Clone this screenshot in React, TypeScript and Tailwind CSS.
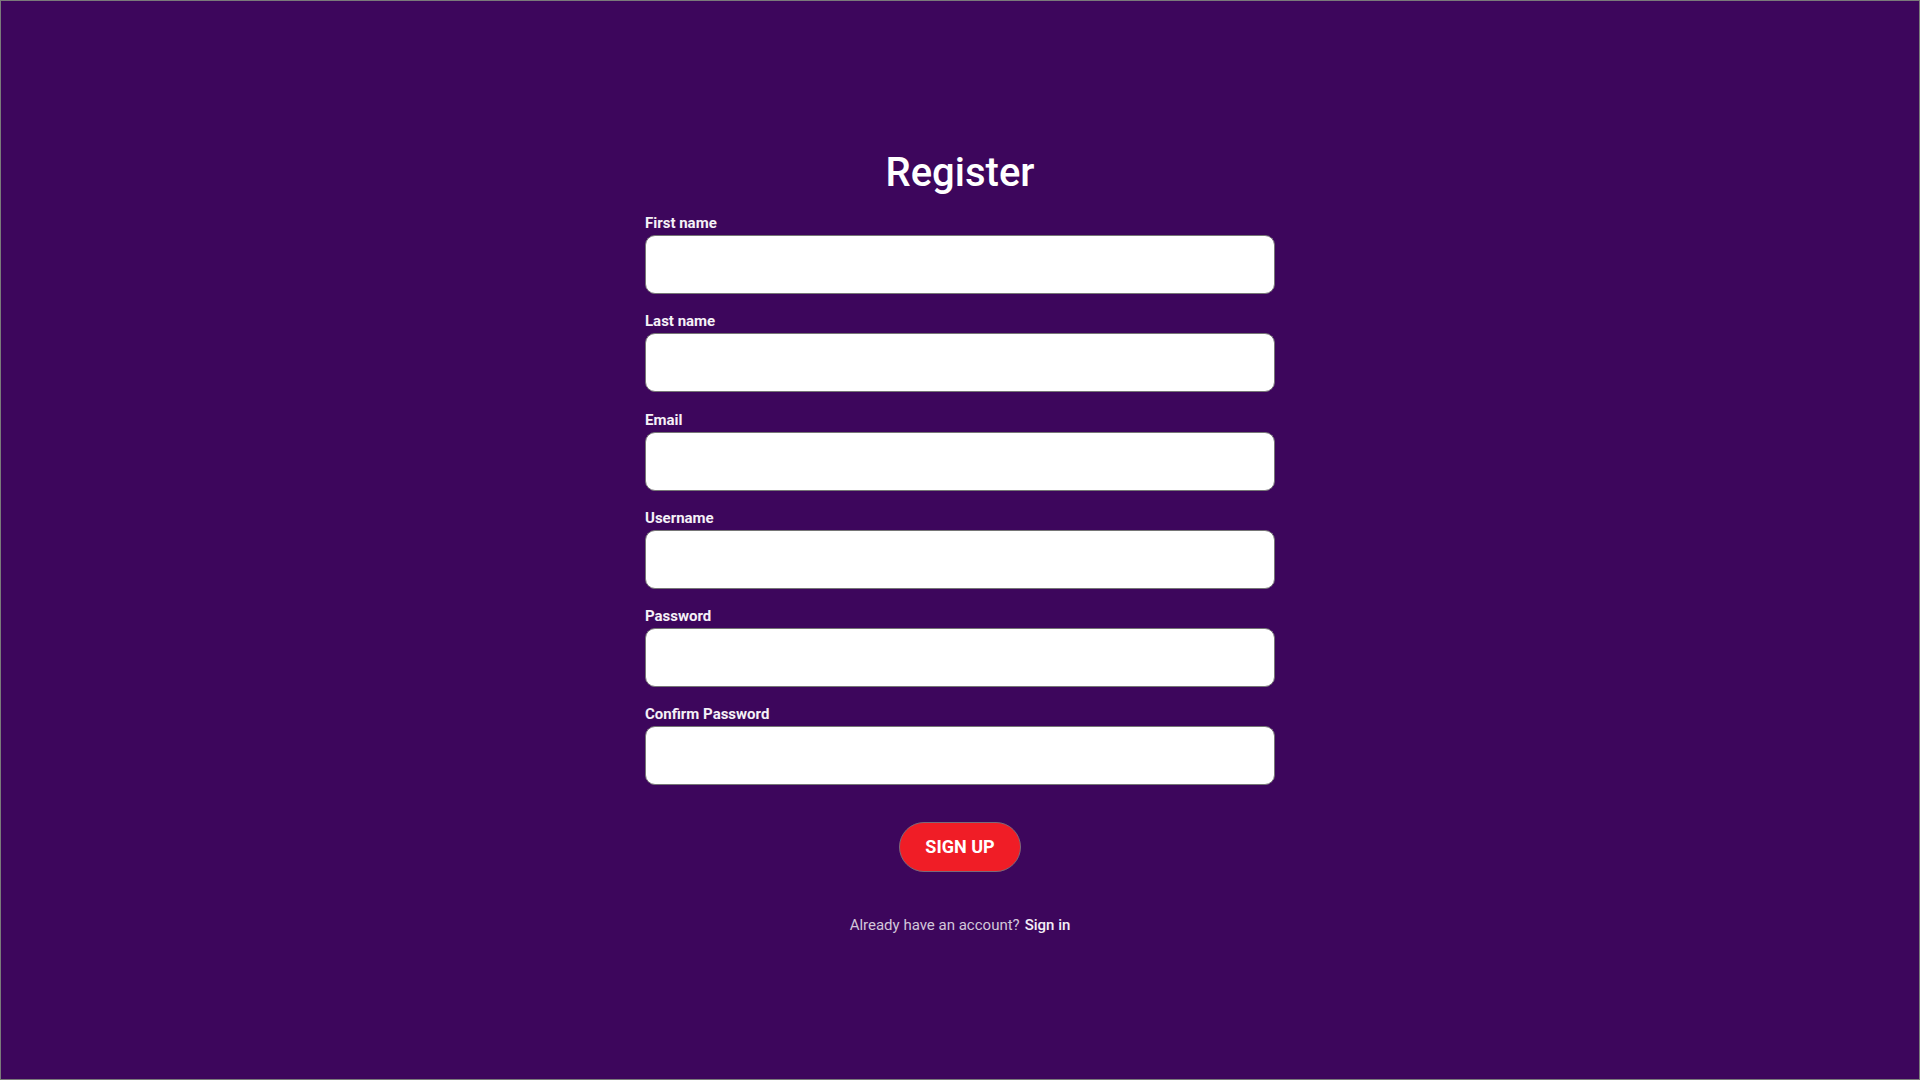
const FIELDS = ["First name", "Last name", "Email", "Username", "Password", "Confirm Password"];

function Field({ label }: { label: string }) {
  const type = label.toLowerCase().includes("password") ? "password" : label === "Email" ? "email" : "text";

  return (
    <div className="mb-[18.3px] flex flex-col">
      <label className="h-[18px] text-[15px] font-bold leading-[18px] text-[#f5f1f7]">{label}</label>
      <input
        type={type}
        className="mt-[3px] h-[59px] w-full rounded-[10px] border border-[#767676] bg-white px-3 text-base text-black outline-none"
      />
    </div>
  );
}

export default function App() {
  return (
    <div
      className="flex h-screen w-full flex-col items-center border border-[#7a7a7a] bg-[#3d065c] pt-[148px]"
      style={{ fontFamily: "Roboto, 'Liberation Sans', sans-serif" }}
    >
      <h1 className="h-[48px] text-[40px] font-medium leading-[48px] text-white">Register</h1>
      <form className="mt-[17px] flex w-[630px] flex-col" onSubmit={(e) => e.preventDefault()}>
        {FIELDS.map((label) => (
          <Field key={label} label={label} />
        ))}
        <button
          type="submit"
          className="mx-auto mt-[18px] h-[50px] w-[122px] rounded-full border border-[#7a6a7a] bg-[#f01d26] text-[18px] font-bold text-white"
        >
          SIGN UP
        </button>
      </form>
      <p className="mt-[44px] text-[15px] leading-[19px] text-[#d2c6da]">
        Already have an account?<span className="ml-[5px] font-medium text-[#f4eef7]">Sign in</span>
      </p>
    </div>
  );
}
